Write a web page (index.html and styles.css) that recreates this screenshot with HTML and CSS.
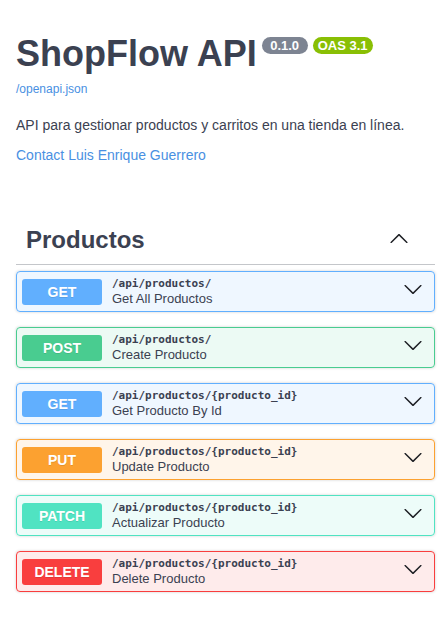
FILE: index.html
```html
<!DOCTYPE html>
<html lang="es">
<head>
<meta charset="utf-8">
<title>ShopFlow API</title>
<link rel="stylesheet" href="styles.css">
</head>
<body>
<div class="page">
  <div class="info">
    <div class="title-row">
      <h1 class="title">ShopFlow API</h1>
      <span class="stamp stamp-version">0.1.0</span>
      <span class="stamp stamp-oas">OAS 3.1</span>
    </div>
    <a class="spec-link" href="#">/openapi.json</a>
    <p class="description">API para gestionar productos y carritos en una tienda en línea.</p>
    <a class="contact" href="#">Contact Luis Enrique Guerrero</a>
  </div>

  <div class="tag">
    <h3 class="tag-name">Productos</h3>
    <svg class="arrow arrow-tag" viewBox="0 0 20 20" width="20" height="20"><path d="M17.418 14.908c.272.268.709.268.979 0s.271-.701 0-.969l-7.908-7.83c-.27-.268-.707-.268-.979 0l-7.908 7.830c-.27.268-.27.701 0 .969.271.268.709.268.979 0L10 7.767l7.418 7.141z"/></svg>
  </div>

  <div class="opblock op-get">
    <span class="method">GET</span>
    <div class="summary-text">
      <span class="path">/api/productos/</span>
      <span class="summary-desc">Get All Productos</span>
    </div>
    <svg class="arrow arrow-op" viewBox="0 0 20 20" width="20" height="20"><path d="M17.418 6.109c.272-.268.709-.268.979 0s.271.701 0 .969l-7.908 7.83c-.27.268-.707.268-.979 0l-7.908-7.83c-.27-.268-.27-.701 0-.969.271-.268.709-.268.979 0L10 13.25l7.418-7.141z"/></svg>
  </div>

  <div class="opblock op-post">
    <span class="method">POST</span>
    <div class="summary-text">
      <span class="path">/api/productos/</span>
      <span class="summary-desc">Create Producto</span>
    </div>
    <svg class="arrow arrow-op" viewBox="0 0 20 20" width="20" height="20"><path d="M17.418 6.109c.272-.268.709-.268.979 0s.271.701 0 .969l-7.908 7.83c-.27.268-.707.268-.979 0l-7.908-7.83c-.27-.268-.27-.701 0-.969.271-.268.709-.268.979 0L10 13.25l7.418-7.141z"/></svg>
  </div>

  <div class="opblock op-get">
    <span class="method">GET</span>
    <div class="summary-text">
      <span class="path">/api/productos/{producto_id}</span>
      <span class="summary-desc">Get Producto By Id</span>
    </div>
    <svg class="arrow arrow-op" viewBox="0 0 20 20" width="20" height="20"><path d="M17.418 6.109c.272-.268.709-.268.979 0s.271.701 0 .969l-7.908 7.83c-.27.268-.707.268-.979 0l-7.908-7.83c-.27-.268-.27-.701 0-.969.271-.268.709-.268.979 0L10 13.25l7.418-7.141z"/></svg>
  </div>

  <div class="opblock op-put">
    <span class="method">PUT</span>
    <div class="summary-text">
      <span class="path">/api/productos/{producto_id}</span>
      <span class="summary-desc">Update Producto</span>
    </div>
    <svg class="arrow arrow-op" viewBox="0 0 20 20" width="20" height="20"><path d="M17.418 6.109c.272-.268.709-.268.979 0s.271.701 0 .969l-7.908 7.83c-.27.268-.707.268-.979 0l-7.908-7.83c-.27-.268-.27-.701 0-.969.271-.268.709-.268.979 0L10 13.25l7.418-7.141z"/></svg>
  </div>

  <div class="opblock op-patch">
    <span class="method">PATCH</span>
    <div class="summary-text">
      <span class="path">/api/productos/{producto_id}</span>
      <span class="summary-desc">Actualizar Producto</span>
    </div>
    <svg class="arrow arrow-op" viewBox="0 0 20 20" width="20" height="20"><path d="M17.418 6.109c.272-.268.709-.268.979 0s.271.701 0 .969l-7.908 7.83c-.27.268-.707.268-.979 0l-7.908-7.83c-.27-.268-.27-.701 0-.969.271-.268.709-.268.979 0L10 13.25l7.418-7.141z"/></svg>
  </div>

  <div class="opblock op-delete">
    <span class="method">DELETE</span>
    <div class="summary-text">
      <span class="path">/api/productos/{producto_id}</span>
      <span class="summary-desc">Delete Producto</span>
    </div>
    <svg class="arrow arrow-op" viewBox="0 0 20 20" width="20" height="20"><path d="M17.418 6.109c.272-.268.709-.268.979 0s.271.701 0 .969l-7.908 7.83c-.27.268-.707.268-.979 0l-7.908-7.83c-.27-.268-.27-.701 0-.969.271-.268.709-.268.979 0L10 13.25l7.418-7.141z"/></svg>
  </div>
</div>
</body>
</html>
```

FILE: styles.css
```css
html, body {
  margin: 0;
  padding: 0;
  background: #fff;
}

body {
  font-family: "Liberation Sans", Arial, sans-serif;
  color: #3b4151;
}

.page {
  padding: 33px 9px 30px 16px;
}

.info {
  display: flex;
  flex-direction: column;
  align-items: flex-start;
}

.title-row {
  display: flex;
  align-items: flex-start;
  gap: 5px;
}

.title {
  margin: 0;
  font-size: 36px;
  line-height: 42px;
  font-weight: 700;
  color: #3b4151;
}

.stamp {
  margin-top: 4px;
  height: 17px;
  box-sizing: border-box;
  padding: 2px 0;
  border-radius: 57px;
  font-size: 13px;
  line-height: 13px;
  font-weight: 700;
  color: #fff;
  text-align: center;
}

.stamp-version {
  width: 46px;
  background: #7d8492;
}

.stamp-oas {
  width: 60px;
  background: #89bf04;
}

.spec-link {
  margin-top: 7px;
  font-size: 12px;
  line-height: 14px;
  color: #4990e2;
  text-decoration: none;
}

.description {
  margin: 21px 0 0;
  font-size: 14px;
  line-height: 16px;
  color: #3b4151;
}

.contact {
  margin-top: 14px;
  font-size: 14px;
  line-height: 16px;
  color: #4990e2;
  text-decoration: none;
}

.tag {
  margin-top: 53px;
  margin-bottom: 6px;
  padding: 10px 26px 10px 10px;
  display: flex;
  align-items: flex-start;
  justify-content: space-between;
  border-bottom: 1px solid rgba(59, 65, 81, 0.3);
}

.tag-name {
  margin: 0;
  font-size: 24px;
  line-height: 28px;
  font-weight: 700;
  color: #3b4151;
}

.arrow {
  flex: none;
  fill: #1d1f24;
}

.arrow-tag {
  margin-top: 2px;
}

.opblock {
  display: flex;
  align-items: center;
  padding: 5px;
  margin-bottom: 15px;
  border: 1px solid #000;
  border-radius: 4px;
  box-shadow: 0 0 3px rgba(0, 0, 0, 0.19);
}

.method {
  flex: none;
  width: 80px;
  padding: 5px 0;
  line-height: 16px;
  font-size: 14px;
  font-weight: 700;
  text-align: center;
  color: #fff;
  border-radius: 3px;
  text-shadow: 0 1px 0 rgba(0, 0, 0, 0.1);
}

.summary-text {
  flex: 1;
  display: flex;
  flex-direction: column;
  padding: 0 10px;
}

.path {
  font-family: "DejaVu Sans Mono", monospace;
  font-size: 11px;
  line-height: 14px;
  font-weight: 700;
  color: #3b4151;
}

.summary-desc {
  font-size: 13px;
  line-height: 15px;
  color: #3b4151;
}

.arrow-op {
  align-self: flex-start;
  margin: 2px 6px 0 0;
}

.op-get { background: rgba(97, 175, 254, 0.1); border-color: #61affe; }
.op-get .method { background: #61affe; }
.op-post { background: rgba(73, 204, 144, 0.1); border-color: #49cc90; }
.op-post .method { background: #49cc90; }
.op-put { background: rgba(252, 161, 48, 0.1); border-color: #fca130; }
.op-put .method { background: #fca130; }
.op-patch { background: rgba(80, 227, 194, 0.1); border-color: #50e3c2; }
.op-patch .method { background: #50e3c2; }
.op-delete { background: rgba(249, 62, 62, 0.1); border-color: #f93e3e; }
.op-delete .method { background: #f93e3e; }
```
